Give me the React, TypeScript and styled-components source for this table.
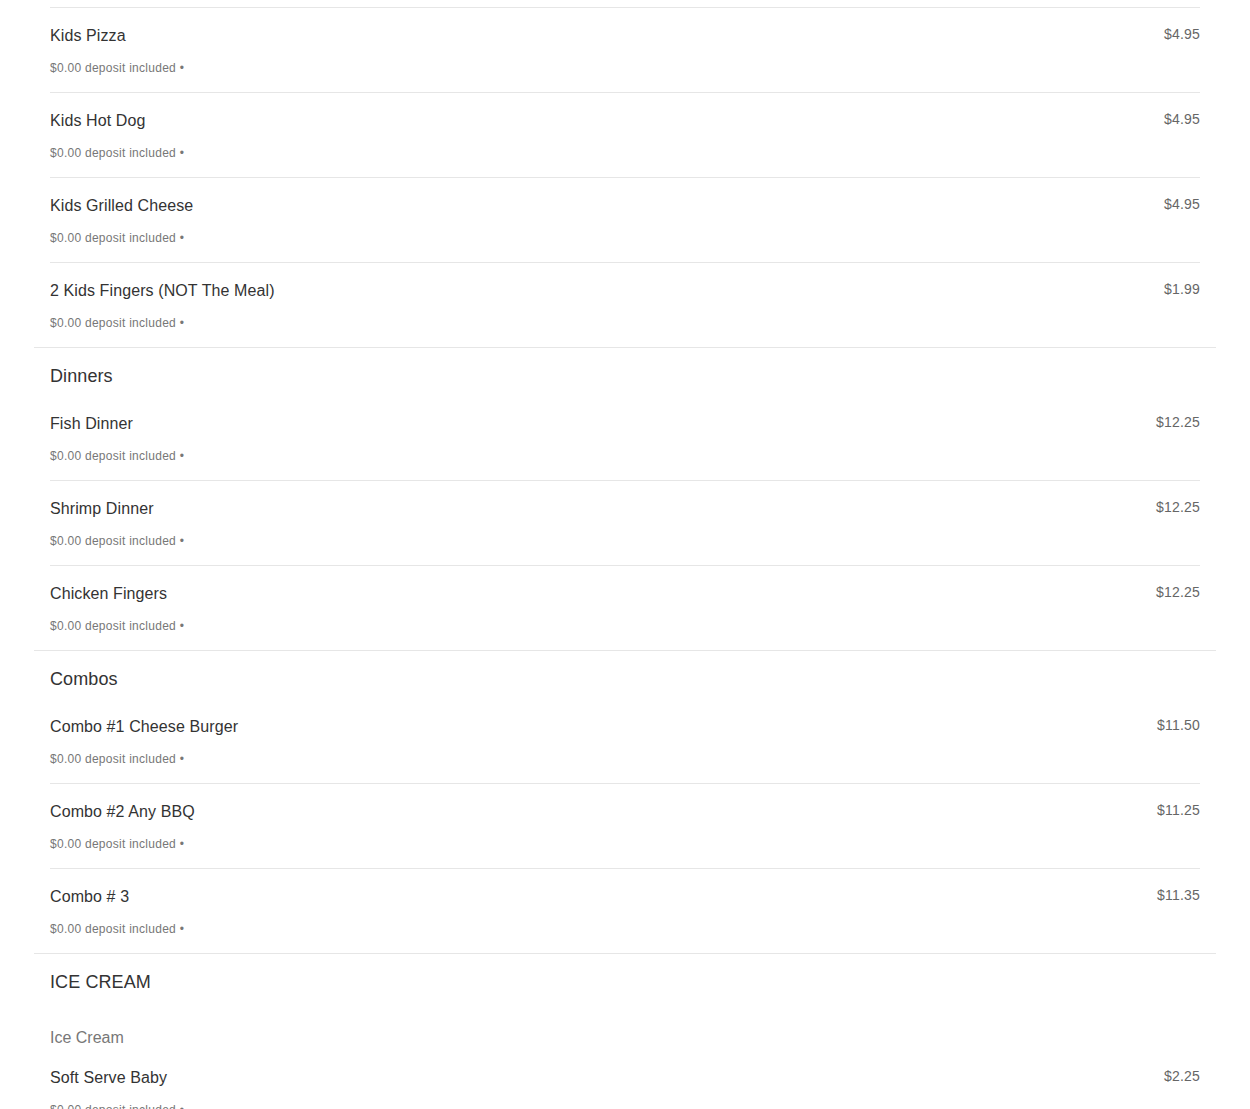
import React from "react";
import styled, { createGlobalStyle } from "styled-components";

const GlobalStyle = createGlobalStyle`
  html, body { margin: 0; padding: 0; background: #fff; }
  body { font-family: "Liberation Sans", Arial, sans-serif; color: #333; }
`;

const Page = styled.main`
  padding: 7px 34px 40px;
`;

const Section = styled.section<{ $last?: boolean }>`
  padding: 0 16px;
  border-bottom: ${(p) => (p.$last ? "none" : "1px solid #e6e6e6")};
`;

const SectionTitle = styled.h2`
  margin: 0 0 9px;
  padding-top: 18px;
  font-size: 18px;
  font-weight: 400;
  line-height: 21px;
  letter-spacing: 0.1px;
  color: #333;
`;

const SubTitle = styled.h3`
  margin: 36px 0 3px;
  font-size: 16px;
  font-weight: 400;
  line-height: 18px;
  color: #777;
`;

const ItemList = styled.ul<{ $topBorder?: boolean }>`
  list-style: none;
  margin: 0;
  padding: 0;
  border-top: ${(p) => (p.$topBorder ? "1px solid #e6e6e6" : "none")};
`;

const Item = styled.li`
  display: flex;
  justify-content: space-between;
  align-items: flex-start;
  padding: 19px 0 17px;
  border-bottom: 1px solid #e6e6e6;
  &:last-child { border-bottom: none; }
`;

const ItemInfo = styled.div`
  display: flex;
  flex-direction: column;
  gap: 16px;
`;

const ItemName = styled.div`
  font-size: 16px;
  line-height: 18px;
  letter-spacing: 0.1px;
  color: #333;
`;

const Deposit = styled.div`
  font-size: 12px;
  line-height: 14px;
  letter-spacing: 0.27px;
  color: #777;
`;

const Price = styled.div`
  font-size: 14px;
  line-height: 16px;
  letter-spacing: 0.2px;
  color: #666;
  margin-top: -1px;
`;

type MenuItem = { name: string; price: string };
type MenuSection = { title?: string; sub?: string; items: MenuItem[] };

const sections: MenuSection[] = [
  {
    items: [
      { name: "Kids Pizza", price: "$4.95" },
      { name: "Kids Hot Dog", price: "$4.95" },
      { name: "Kids Grilled Cheese", price: "$4.95" },
      { name: "2 Kids Fingers (NOT The Meal)", price: "$1.99" },
    ],
  },
  {
    title: "Dinners",
    items: [
      { name: "Fish Dinner", price: "$12.25" },
      { name: "Shrimp Dinner", price: "$12.25" },
      { name: "Chicken Fingers", price: "$12.25" },
    ],
  },
  {
    title: "Combos",
    items: [
      { name: "Combo #1 Cheese Burger", price: "$11.50" },
      { name: "Combo #2 Any BBQ", price: "$11.25" },
      { name: "Combo # 3", price: "$11.35" },
    ],
  },
  {
    title: "ICE CREAM",
    sub: "Ice Cream",
    items: [
      { name: "Soft Serve Baby", price: "$2.25" },
      { name: "Soft Serve Small", price: "$2.95" },
    ],
  },
];

export default function App() {
  return (
    <>
      <GlobalStyle />
      <Page>
        {sections.map((s, i) => (
          <Section key={i} $last={i === sections.length - 1}>
            {s.title && <SectionTitle>{s.title}</SectionTitle>}
            {s.sub && <SubTitle>{s.sub}</SubTitle>}
            <ItemList $topBorder={!s.title}>
              {s.items.map((it) => (
                <Item key={it.name}>
                  <ItemInfo>
                    <ItemName>{it.name}</ItemName>
                    <Deposit>$0.00 deposit included •</Deposit>
                  </ItemInfo>
                  <Price>{it.price}</Price>
                </Item>
              ))}
            </ItemList>
          </Section>
        ))}
      </Page>
    </>
  );
}
